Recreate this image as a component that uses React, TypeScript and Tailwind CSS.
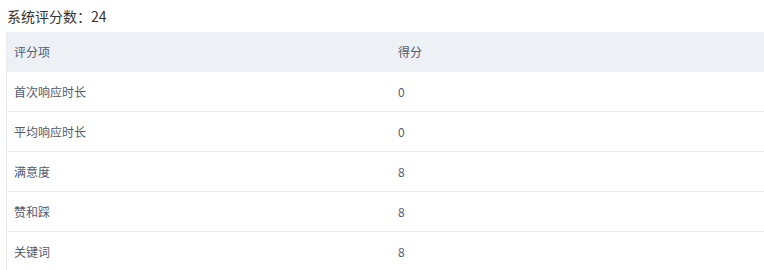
import React from "react";

const rows = [
  { name: "首次响应时长", score: 0 },
  { name: "平均响应时长", score: 0 },
  { name: "满意度", score: 8 },
  { name: "赞和踩", score: 8 },
  { name: "关键词", score: 8 },
];

export default function App() {
  return (
    <div
      className="w-[764px] h-[270px] overflow-hidden bg-white"
      style={{ fontFamily: '"Noto Sans CJK SC", "Noto Sans", sans-serif' }}
    >
      <div className="h-8 pl-[7px] flex items-center text-[14px] text-[#333]">
        系统评分数：24
      </div>
      <div className="ml-[6px] border-l border-[#e8eaec] text-[12px] text-[#515a6e]">
        <div className="flex h-10 items-center bg-[#edf0f5]">
          <div className="w-[384px] pl-[7px]">评分项</div>
          <div className="flex-1 pl-[7px]">得分</div>
        </div>
        {rows.map((r) => (
          <div key={r.name} className="flex h-10 items-center border-b border-[#e8eaec]">
            <div className="w-[384px] pl-[7px]">{r.name}</div>
            <div className="flex-1 pl-[7px]">{r.score}</div>
          </div>
        ))}
      </div>
    </div>
  );
}
